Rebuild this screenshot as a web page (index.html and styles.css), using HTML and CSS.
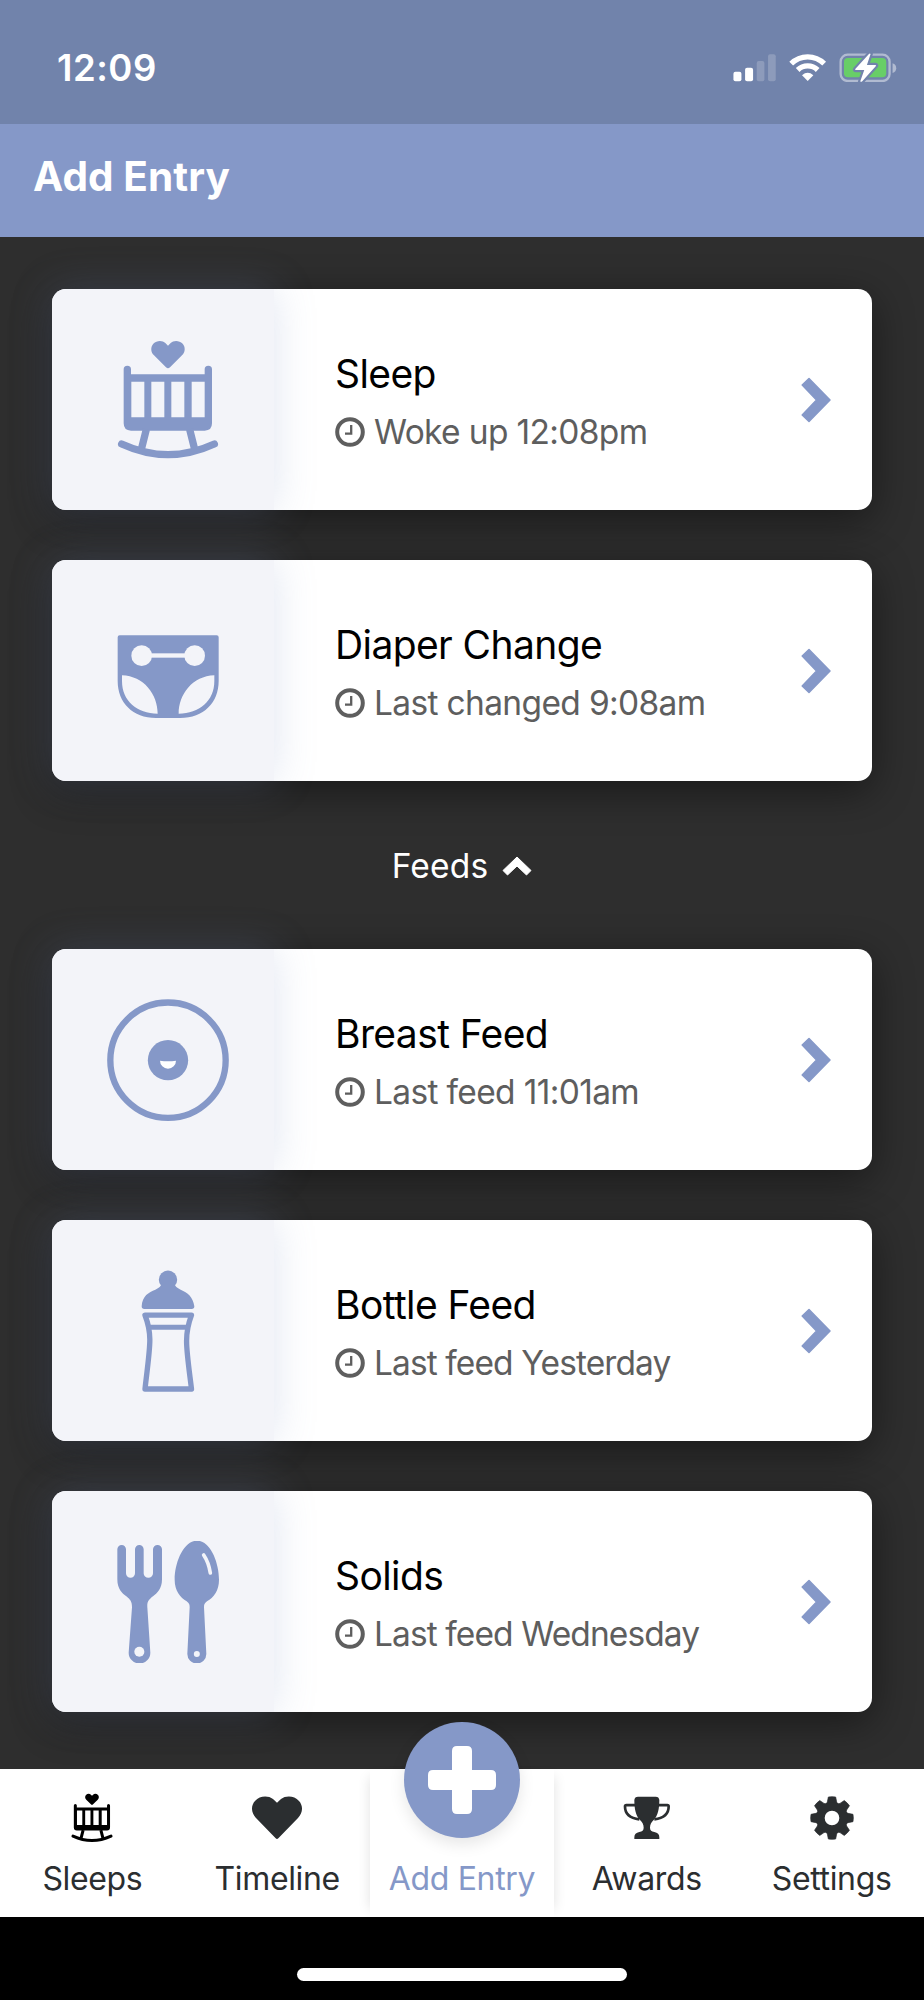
FILE: index.html
```html
<!DOCTYPE html>
<html lang="en">
<head>
  <meta charset="UTF-8" />
  <meta name="viewport" content="width=device-width, initial-scale=1.0" />
  <title>Add Entry</title>
  <link rel="stylesheet" href="styles.css">
</head>
<body>
  <!-- shared icons -->
  <svg class="sprite" aria-hidden="true">
    <symbol id="crib" viewBox="200 205 366 366">
      <path d="M383 293q-3 0-6-3l-36-36c-11-11-10-26-2-35c11-11 28-10 36-2l8 8l8-8c8-8 25-9 36 2c8 9 9 24-2 35l-36 36q-3 3-6 3z" fill="currentColor"/>
      <path fill-rule="evenodd" d="M250 296a11 11 0 0 1 22 0v15h221v-15a11 11 0 0 1 22 0v162q0 22-22 22H272q-22 0-22-22zM273 333v107h39V333zM333 333v107h39V333zM393 333v107h39V333zM454 333v107h39V333z" fill="currentColor"/>
      <path d="M318 476l-15 60M448 476l15 60" fill="none" stroke="currentColor" stroke-width="22"/>
      <path d="M244 520Q383 584 522 520" fill="none" stroke="currentColor" stroke-width="22" stroke-linecap="round"/>
    </symbol>
    <symbol id="clock" viewBox="0 0 30 30">
      <circle cx="15" cy="15" r="12.8" fill="none" stroke="currentColor" stroke-width="4"/>
      <path d="M16.2 8v8.6H10" fill="none" stroke="currentColor" stroke-width="2.3"/>
    </symbol>
    <symbol id="chevron" viewBox="0 0 30 46">
      <path d="M8 1.5L29 23L8 44.500L1.200 38L15.500 23L1.200 8z" fill="currentColor" stroke="currentColor" stroke-width="1.500" stroke-linejoin="round"/>
    </symbol>
  </svg>

  <div class="status-bar">
    <span class="time">12:09</span>
    <svg class="status-icons" viewBox="38 38 492 88">
      <g fill="#fff">
        <rect x="39" y="94" width="24" height="29" rx="6"/>
        <rect x="74" y="82" width="24" height="41" rx="6"/>
        <rect x="109" y="62" width="23" height="61" rx="6" opacity=".2"/>
        <rect x="143" y="42" width="23" height="81" rx="6" opacity=".2"/>
        <path d="M262 122l-17-17q17-15 34 0z"/>
      </g>
      <path d="M212.500 70a70 70 0 0 1 99 0M232 89a43 43 0 0 1 60 0" fill="none" stroke="#fff" stroke-width="16"/>
      <rect x="361" y="43" width="147" height="79" rx="21" fill="none" stroke="#fff" stroke-opacity=".45" stroke-width="7"/>
      <path d="M517 69q11 4 11 14.500t-11 14.500z" fill="#fff" opacity=".45"/>
      <rect x="371" y="53" width="127" height="58" rx="12" fill="#68ce67"/>
      <path d="M446 41L405 86q-2 3 2 3h25l-12 34q2 3 6 0l41-46q2-3-2-3h-25l11-33q-2-3-5 0z" fill="#fff" stroke="#7183ab" stroke-width="13" paint-order="stroke"/>
    </svg>
  </div>

  <header class="header">
    <h1>Add Entry</h1>
  </header>

  <main class="content">
    <a class="card">
      <div class="card-icon">
        <svg><use href="#crib"/></svg>
      </div>
      <div class="card-text">
        <h2>Sleep</h2>
        <p class="today"><svg class="clock"><use href="#clock"/></svg><span>Woke up 12:08pm</span></p>
      </div>
      <svg class="chevron"><use href="#chevron"/></svg>
    </a>

    <a class="card">
      <div class="card-icon">
        <svg viewBox="200 207 366 366">
          <path fill-rule="evenodd" fill="currentColor" d="M238 283H529q6 0 6 6V420C535 485 490 531 420 531H347C277 531 232 485 232 420V289q0-6 6-6zM245 403C310 405 352 460 352 518C290 518 245 480 245 420zM522 403C457 405 415 460 415 518C477 518 522 480 522 420z"/>
          <g fill="#f3f4f9">
            <circle cx="304" cy="344" r="31"/>
            <circle cx="463" cy="344" r="31"/>
            <rect x="320" y="337" width="130" height="13"/>
          </g>
        </svg>
      </div>
      <div class="card-text">
        <h2>Diaper Change</h2>
        <p class="today"><svg class="clock"><use href="#clock"/></svg><span>Last changed 9:08am</span></p>
      </div>
      <svg class="chevron"><use href="#chevron"/></svg>
    </a>

    <div class="divider">
      <span>Feeds</span>
      <svg viewBox="0 0 30 20"><path d="M15 1L29 14.500L24.500 19L15 10L5.500 19L1 14.500z" fill="#fff" stroke="#fff" stroke-linejoin="round"/></svg>
    </div>

    <a class="card">
      <div class="card-icon">
        <svg viewBox="200 205 366 366">
          <circle cx="383" cy="388.500" r="173" fill="none" stroke="currentColor" stroke-width="19"/>
          <circle cx="383" cy="388.500" r="60.500" fill="currentColor"/>
          <path d="M359 390Q383 394 407 390A24 24 0 0 1 359 390z" fill="#fff"/>
        </svg>
      </div>
      <div class="card-text">
        <h2>Breast Feed</h2>
        <p class="today"><svg class="clock"><use href="#clock"/></svg><span>Last feed 11:01am</span></p>
      </div>
      <svg class="chevron"><use href="#chevron"/></svg>
    </a>

    <a class="card">
      <div class="card-icon">
        <svg viewBox="200 208 366 366">
          <circle cx="383" cy="237" r="27.500" fill="currentColor"/>
          <path d="M312 325q-8 0-8-8C306 285 325 275 345 267Q362 259 363 250H403Q404 259 421 267C442 276 458 288 462 317q0 8-8 8z" fill="currentColor"/>
          <path d="M314 343.500H453.500C430 405 438 440 453.500 565H314C328 440 338 405 314 343.500z" fill="none" stroke="currentColor" stroke-width="16" stroke-linejoin="round"/>
          <path d="M324 379.500H443" stroke="currentColor" stroke-width="15"/>
        </svg>
      </div>
      <div class="card-text">
        <h2>Bottle Feed</h2>
        <p><svg class="clock"><use href="#clock"/></svg><span>Last feed Yesterday</span></p>
      </div>
      <svg class="chevron"><use href="#chevron"/></svg>
    </a>

    <a class="card">
      <div class="card-icon">
        <svg viewBox="200 181 366 366">
          <path fill="currentColor" d="M231 206a13 13 0 0 1 26 0V278a13.500 13.500 0 0 0 27 0V206a13 13 0 0 1 26 0V278a14 13.500 0 0 0 28 0V206a13.500 13 0 0 1 27 0V296C365 325 350 338 338 347C325 357 320 363 321 380L330 516a32.500 32.500 0 0 1-65 0L275 380C275 363 270 357 258 347C245 338 231 325 231 296z"/>
          <path fill="currentColor" d="M470 180C510 180 536 245 536 297C536 330 520 350 500 362C492 368 491 372 491 380L498 520a28.500 28.500 0 0 1-57 0L448 380C448 372 447 368 439 362C420 350 403 330 403 297C403 245 430 180 470 180z"/>
          <circle cx="297" cy="513" r="15" fill="#f3f4f9"/>
          <circle cx="469.500" cy="520" r="9" fill="#f3f4f9"/>
          <path d="M490 223Q505 245 510 277" fill="none" stroke="#f3f4f9" stroke-width="11" stroke-linecap="round"/>
        </svg>
      </div>
      <div class="card-text">
        <h2>Solids</h2>
        <p><svg class="clock"><use href="#clock"/></svg><span>Last feed Wednesday</span></p>
      </div>
      <svg class="chevron"><use href="#chevron"/></svg>
    </a>
  </main>

  <nav class="tabs">
    <a class="tab">
      <svg class="tab-crib"><use href="#crib"/></svg>
      <span>Sleeps</span>
    </a>
    <a class="tab">
      <svg viewBox="756 279 150 150"><path fill="currentColor" d="M827 415L768 354C752 337 753 316 765 303C779 287 804 286 819 297L831 308L843 297C858 286 883 287 897 303C909 316 910 337 894 354L835 415Q831 419 827 415z"/></svg>
      <span>Timeline</span>
    </a>
    <a class="tab active">
      <div class="add-btn">
        <svg viewBox="0 0 68 68"><path fill="#fff" d="M24 5q0-5 5-5h10q5 0 5 5v19h19q5 0 5 5v10q0 5-5 5H44v19q0 5-5 5H29q-5 0-5-5V44H5q-5 0-5-5V29q0-5 5-5h19z"/></svg>
      </div>
      <span>Add Entry</span>
    </a>
    <a class="tab">
      <svg viewBox="478 279 150 150">
        <path fill="currentColor" d="M526 290H579q10 0 11 10C590 325 586 348 573 360Q562 370 562 383Q562 394 575 396Q590 399 590 412V417H515V412Q515 399 530 396Q543 394 543 383Q543 370 532 360C519 348 515 325 515 300q1-10 11-10z"/>
        <path fill="none" stroke="currentColor" stroke-width="8" stroke-linejoin="round" d="M518 315.500H491q-4 0-4 4C487 343 504 355 530 358M587 315.500H614q4 0 4 4C618 343 601 355 575 358"/>
      </svg>
      <span>Awards</span>
    </a>
    <a class="tab">
      <svg viewBox="-75 -75 150 150">
        <defs><path id="tooth" d="M-11-63Q0-65 11-63L14-48L20-38H-20L-14-48z"/></defs>
        <g fill="currentColor" stroke="currentColor" stroke-linejoin="round" stroke-width="2">
          <use href="#tooth"/>
          <use href="#tooth" transform="rotate(45)"/>
          <use href="#tooth" transform="rotate(90)"/>
          <use href="#tooth" transform="rotate(135)"/>
          <use href="#tooth" transform="rotate(180)"/>
          <use href="#tooth" transform="rotate(225)"/>
          <use href="#tooth" transform="rotate(270)"/>
          <use href="#tooth" transform="rotate(315)"/>
        </g>
        <circle r="34.500" fill="none" stroke="currentColor" stroke-width="25"/>
      </svg>
      <span>Settings</span>
    </a>
  </nav>

  <div class="home-area">
    <div class="home-bar"></div>
  </div>
</body>
</html>
```

FILE: styles.css
```css
* {
  box-sizing: border-box;
}
body {
  margin: 0;
  background: #2e2e2e;
  font-family: Inter, 'Liberation Sans', sans-serif;
  display: flex;
  flex-direction: column;
  height: 2000px;
  overflow: hidden;
}
svg {
  display: block;
  flex: none;
}
h1, h2, p {
  margin: 0;
}
.sprite {
  display: none;
}

.status-bar {
  flex: none;
  height: 124px;
  padding: 11px 27px 0 57px;
  background: #7183ab;
  display: flex;
  align-items: center;
  justify-content: space-between;
}
.time {
  color: #fff;
  font-size: 36.5px;
  font-weight: 600;
  line-height: 44px;
  letter-spacing: 0.5px;
}
.status-icons {
  width: 164px;
  height: 29.3px;
}
.header {
  flex: none;
  height: 113px;
  padding: 0 33px 7px;
  background: #8598c8;
  display: flex;
  align-items: center;
}
.header h1 {
  color: #fff;
  font-size: 40.5px;
  font-weight: 700;
  line-height: 48px;
  letter-spacing: 0.1px;
}

.content {
  flex: none;
  height: 1532px;
  padding: 52px 52px 0;
}
.card {
  display: flex;
  align-items: center;
  height: 221px;
  margin-bottom: 50px;
  padding-right: 41px;
  background: #fff;
  border-radius: 14px;
  box-shadow: 0 10px 40px rgba(0, 0, 0, 0.45);
}
.card-icon {
  width: 222px;
  height: 221px;
  padding-left: 9px;
  display: flex;
  align-items: center;
  justify-content: center;
  background: #f3f4f9;
  border-radius: 14px 0 0 14px;
  box-shadow: 0 0 40px rgba(132, 151, 199, 0.25);
  color: #8598c8;
}
.card-icon svg {
  width: 122px;
  height: 122px;
}
.card-text {
  flex: 1;
  padding: 7px 0 0 61px;
}
.card-text h2 {
  font-size: 39px;
  font-weight: 400;
  line-height: 58px;
  letter-spacing: -0.6px;
  color: #000;
}
.card-text p {
  display: flex;
  align-items: center;
  font-size: 33.5px;
  line-height: 58px;
  letter-spacing: -0.9px;
  color: #5e5e5e;
}
.card-text .today {
  letter-spacing: -0.65px;
}
.card-text .clock {
  width: 30px;
  height: 30px;
  margin-right: 9px;
}
.chevron {
  width: 30px;
  height: 46px;
  color: #8598c8;
}
.divider {
  display: flex;
  align-items: center;
  justify-content: center;
  height: 69px;
  margin-bottom: 49px;
  color: #fff;
  font-size: 33.5px;
  letter-spacing: 0.2px;
}
.divider svg {
  width: 30px;
  height: 20px;
  margin-left: 14px;
}

.tabs {
  flex: none;
  height: 148px;
  display: grid;
  grid-template-columns: repeat(5, 1fr);
  background: #fff;
  position: relative;
}
.tab {
  display: flex;
  flex-direction: column;
  align-items: center;
  padding-top: 24px;
  color: #2b2e30;
  font-size: 32px;
  letter-spacing: -0.35px;
}
.tab svg {
  width: 50px;
  height: 50px;
}
.tab > span {
  margin-top: 16px;
  line-height: 40px;
  white-space: nowrap;
}
.tab .tab-crib {
  color: #000;
}
.tab.active {
  padding-top: 0;
  background: #fff;
  color: #8598c8;
  box-shadow: 8px 0 12px -8px rgba(0, 0, 0, 0.12), -8px 0 12px -8px rgba(0, 0, 0, 0.12);
}
.tab .add-btn {
  width: 116px;
  height: 116px;
  margin-top: -47px;
  margin-bottom: 5px;
  border-radius: 50%;
  background: #8598c8;
  box-shadow: 0 6px 16px rgba(0, 0, 0, 0.1);
  display: flex;
  align-items: center;
  justify-content: center;
}
.add-btn svg {
  width: 68px;
  height: 68px;
}

.home-area {
  flex: 1;
  background: #000;
  display: flex;
  justify-content: center;
  align-items: flex-start;
  padding-top: 51px;
}
.home-bar {
  width: 330px;
  height: 13px;
  border-radius: 7px;
  background: #fff;
}
```
